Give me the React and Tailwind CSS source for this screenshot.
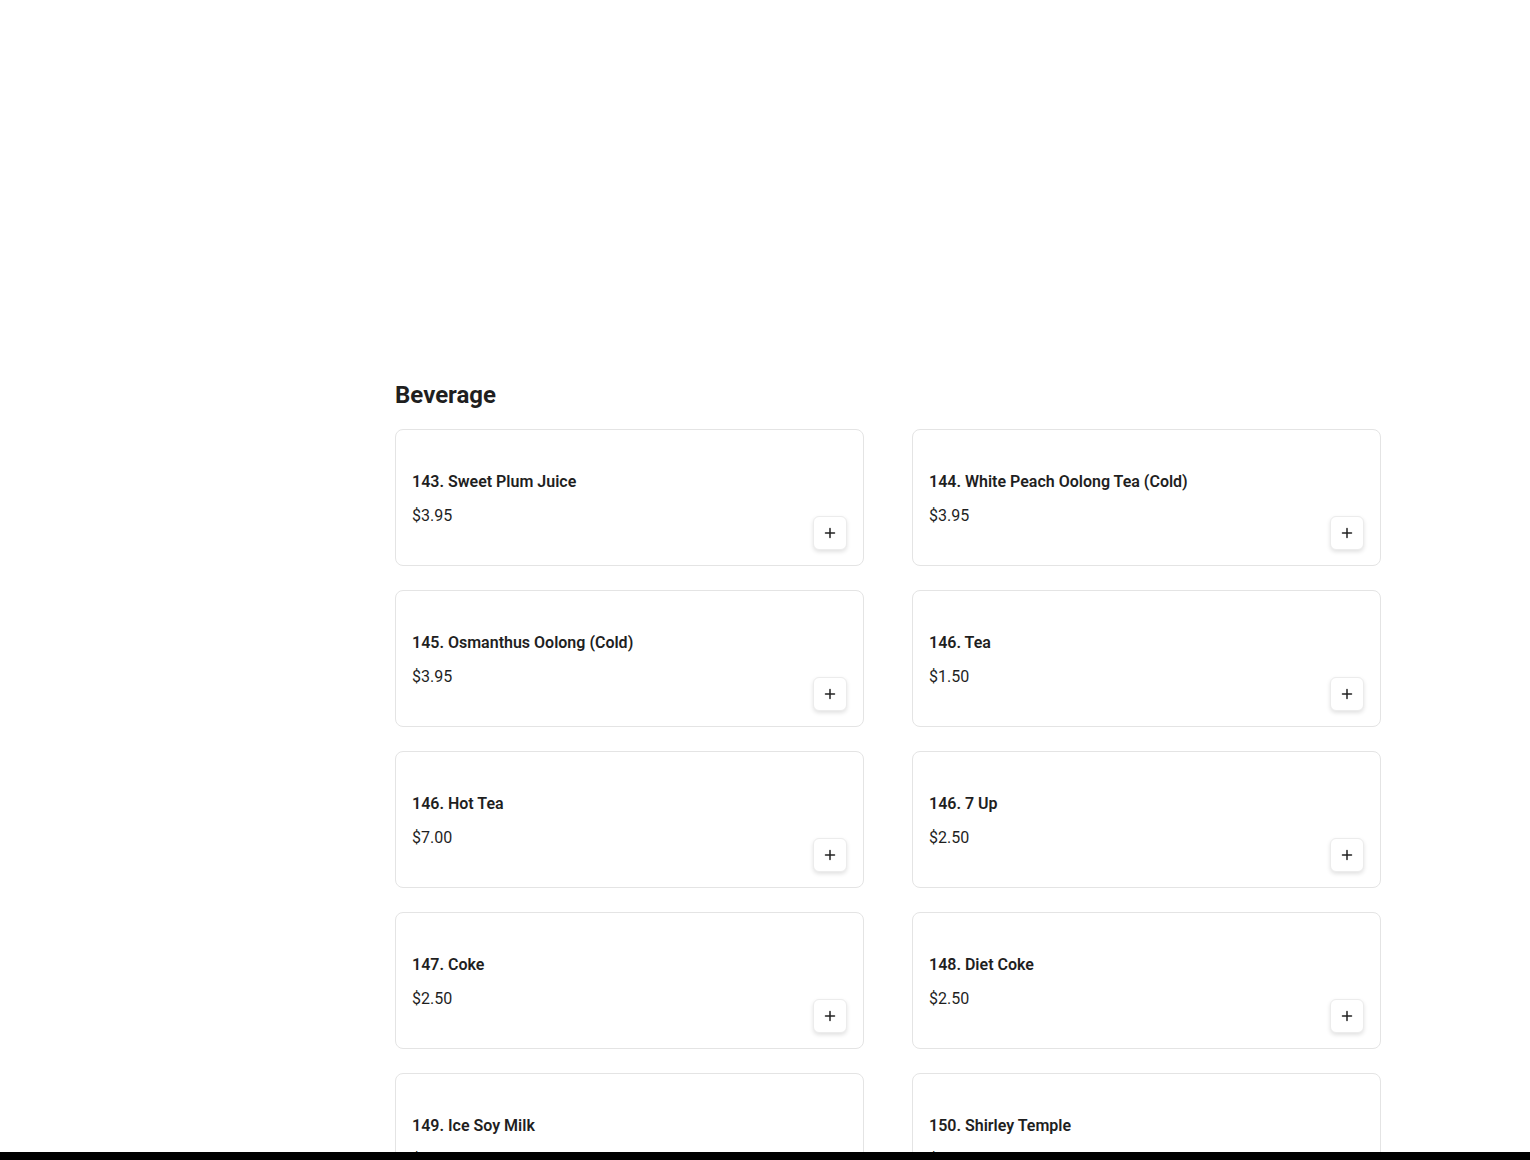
import React from "react";

const ITEMS = [
    { name: "143. Sweet Plum Juice", price: "$3.95" },
    { name: "144. White Peach Oolong Tea (Cold)", price: "$3.95" },
    { name: "145. Osmanthus Oolong (Cold)", price: "$3.95" },
    { name: "146. Tea", price: "$1.50" },
    { name: "146. Hot Tea", price: "$7.00" },
    { name: "146. 7 Up", price: "$2.50" },
    { name: "147. Coke", price: "$2.50" },
    { name: "148. Diet Coke", price: "$2.50" },
    { name: "149. Ice Soy Milk", price: "$3.00" },
    { name: "150. Shirley Temple", price: "$3.50" },
];

function PlusIcon() {
    return (
        <svg width="12" height="12" viewBox="0 0 12 12" fill="none" stroke="#222" strokeWidth="1.5" strokeLinecap="round">
            <path d="M6 1.5v9M1.5 6h9" />
        </svg>
    );
}

function MenuCard({ item }) {
    return (
        <div className="h-[137px] border border-[#e4e4e4] rounded-lg bg-white px-4 pt-[17px] pb-[15px] flex justify-between">
            <div className="self-center flex flex-col gap-[10px]">
                <h3 className="text-base leading-6 font-semibold text-[#1f1f1f]">{item.name}</h3>
                <p className="text-base leading-6 text-[#1f1f1f]">{item.price}</p>
            </div>
            <button
                type="button"
                aria-label="Add"
                className="self-end w-[34px] h-[34px] rounded-md bg-white border border-[#ececec] shadow-[0_2px_4px_rgba(0,0,0,0.12)] flex items-center justify-center"
            >
                <PlusIcon />
            </button>
        </div>
    );
}

export default function App() {
    return (
        <div className="min-h-screen bg-white font-['Roboto','Liberation_Sans',sans-serif] text-[#1f1f1f]">
            <section className="ml-[395px] w-[986px] pt-[379px] pb-24">
                <h2 className="text-2xl leading-8 font-bold mb-[18px]">Beverage</h2>
                <div className="grid grid-cols-2 gap-x-12 gap-y-6">
                    {ITEMS.map((item, i) => (
                        <MenuCard key={i} item={item} />
                    ))}
                </div>
            </section>
            {/* bottom strip */}
            <div className="fixed bottom-0 left-0 right-0 h-2 bg-black" />
        </div>
    );
}
